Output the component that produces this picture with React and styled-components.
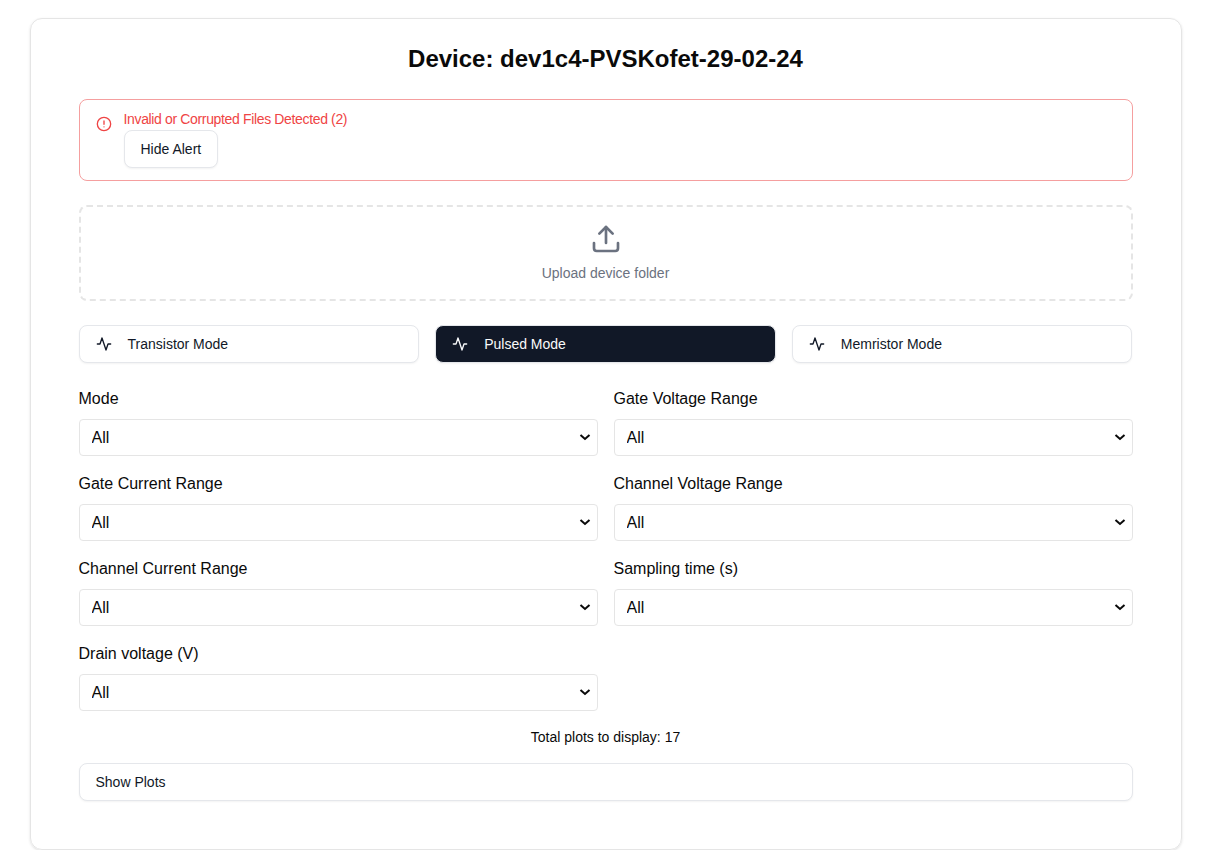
import React from "react";
import styled, { createGlobalStyle, css } from "styled-components";
import { Upload } from "lucide-react";

const GlobalStyle = createGlobalStyle`
  *, *::before, *::after { box-sizing: border-box; }
  body {
    margin: 0;
    height: 850px;
    overflow: hidden;
    background: #fff;
    color: #0a0a0a;
    font: 16px/24px "Liberation Sans", Arial, sans-serif;
  }
`;

const Page = styled.main`
  padding: 18px 43px 0 29.5px;
`;

const Card = styled.section`
  width: 1152px;
  height: 832px;
  padding: 24px 48px 48px;
  border: 1px solid #e5e5e5;
  border-radius: 12px;
  box-shadow: 0 1px 3px rgba(0, 0, 0, 0.1), 0 1px 2px -1px rgba(0, 0, 0, 0.1);
`;

const Title = styled.h1`
  margin: 0 0 24px;
  font-size: 24px;
  line-height: 32px;
  font-weight: 700;
  text-align: center;
`;

const Alert = styled.div`
  display: flex;
  align-items: flex-start;
  gap: 12px;
  height: 82px;
  margin-bottom: 24px;
  padding: 12px 16px;
  border: 1px solid #f59f9f;
  border-radius: 8px;
  color: #ef4444;
`;

const Icon = styled.svg`
  flex: none;
  width: 16px;
  height: 16px;
  fill: none;
  stroke: currentColor;
  stroke-width: 2;
  stroke-linecap: round;
  stroke-linejoin: round;
`;

const AlertIcon = styled(Icon)`
  margin-top: 4px;
`;

const AlertTitle = styled.div`
  margin-bottom: 4px;
  font-size: 14px;
  line-height: 14px;
  letter-spacing: -0.025em;
`;

const Button = styled.button`
  display: flex;
  align-items: center;
  gap: 16px;
  height: 38px;
  padding: 0 16px;
  border: 1px solid #e5e7eb;
  border-radius: 8px;
  background: #fff;
  color: #111827;
  font: 14px/20px "Liberation Sans", Arial, sans-serif;
  box-shadow: 0 1px 2px rgba(0, 0, 0, 0.05);
  width: ${(p) => (p.$wide ? "100%" : "auto")};
  ${(p) =>
    p.$active &&
    css`
      background: #111827;
      color: #f9fafb;
    `}
`;

const DropZone = styled.div`
  display: flex;
  flex-direction: column;
  align-items: center;
  gap: 8px;
  height: 96px;
  margin-bottom: 24px;
  padding-top: 16px;
  border: 2px dashed #e5e5e5;
  border-radius: 8px;
  color: #6b7280;
  font-size: 14px;
  line-height: 20px;
`;

const Modes = styled.div`
  display: grid;
  grid-template-columns: repeat(3, 1fr);
  gap: 16px;
  margin-bottom: 24px;
`;

const Filters = styled.div`
  display: grid;
  grid-template-columns: repeat(2, 1fr);
  gap: 16px;
  margin-bottom: 16px;
`;

const Field = styled.label`
  display: flex;
  flex-direction: column;
  gap: 8px;
`;

const SelectBox = styled.span`
  display: grid;
  align-items: center;

  > * {
    grid-area: 1 / 1;
  }
`;

const Select = styled.select`
  appearance: none;
  width: 100%;
  height: 37px;
  padding: 8px 12px;
  border: 1px solid #e5e5e5;
  border-radius: 4px;
  background: #fff;
  color: #0a0a0a;
  font: 16px "Liberation Sans", Arial, sans-serif;
`;

const Arrow = styled.svg`
  justify-self: end;
  width: 12px;
  height: 8px;
  margin: 0 6.5px 1px 0;
  pointer-events: none;
`;

const Total = styled.p`
  margin: 0 0 16px;
  font-size: 14px;
  line-height: 20px;
  text-align: center;
`;

const modes = ["Transistor Mode", "Pulsed Mode", "Memristor Mode"];
const filters = [
  "Mode",
  "Gate Voltage Range",
  "Gate Current Range",
  "Channel Voltage Range",
  "Channel Current Range",
  "Sampling time (s)",
  "Drain voltage (V)",
];

export default function App() {
  return (
    <Page>
      <GlobalStyle />
      <Card>
        <Title>Device: dev1c4-PVSKofet-29-02-24</Title>
        <Alert>
          <AlertIcon viewBox="0 0 24 24">
            <circle cx="12" cy="12" r="10" />
            <path d="M12 7.5v5M12 16.3h.01" />
          </AlertIcon>
          <div>
            <AlertTitle>Invalid or Corrupted Files Detected (2)</AlertTitle>
            <Button>Hide Alert</Button>
          </div>
        </Alert>
        <DropZone>
          <Upload size={32} />
          <span>Upload device folder</span>
        </DropZone>
        <Modes>
          {modes.map((mode) => (
            <Button key={mode} $active={mode === "Pulsed Mode"}>
              <Icon viewBox="0 0 24 24">
                <path d="M22 12h-4l-3 9L9 3l-3 9H2" />
              </Icon>
              {mode}
            </Button>
          ))}
        </Modes>
        <Filters>
          {filters.map((name) => (
            <Field key={name}>
              {name}
              <SelectBox>
                <Select>
                  <option>All</option>
                </Select>
                <Arrow viewBox="0 0 12 8" fill="none" stroke="#0a0a0a" strokeWidth="2">
                  <path d="M1.5 2 L6 6 L10.5 2" />
                </Arrow>
              </SelectBox>
            </Field>
          ))}
        </Filters>
        <Total>Total plots to display: 17</Total>
        <Button $wide>Show Plots</Button>
      </Card>
    </Page>
  );
}
